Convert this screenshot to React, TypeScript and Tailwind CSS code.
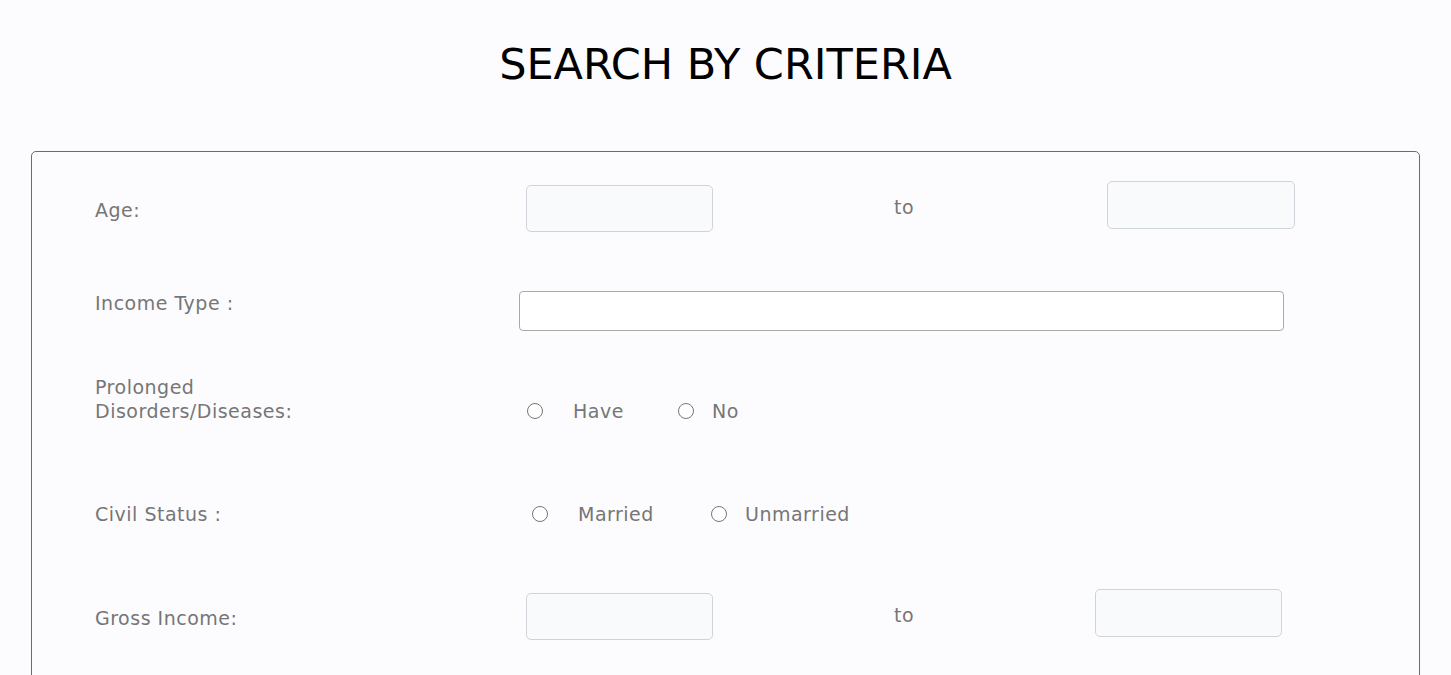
import React from "react";

const font = { fontFamily: '"DejaVu Sans", "Liberation Sans", sans-serif' };

const labelCls = "text-[19px] leading-6 tracking-[0.5px] text-[#767676]";

function Radio({ label, gap, width }: { label: string; gap: string; width?: string }) {
  return (
    <label className={`flex items-center ${width ?? ""}`}>
      <span className="block h-4 w-4 shrink-0 rounded-full border border-[#767676] bg-white" />
      <span className={`${gap} ${labelCls}`}>{label}</span>
    </label>
  );
}

export default function App() {
  return (
    <div className="min-h-screen bg-[#fcfcfe] pt-[42px]" style={font}>
      <h1 className="text-center text-[43px] leading-[44px] font-normal text-black">
        SEARCH BY CRITERIA
      </h1>

      <div className="mx-[31px] mt-[65px] h-[600px] rounded-[5px] border border-[#6b6b6b] pt-[29px] pl-[63px]">
        {/* Age */}
        <div className="flex items-start">
          <div className={`mt-[17px] w-[431px] ${labelCls}`}>Age:</div>
          <input className="mt-[4px] h-[47px] w-[187px] rounded-[5px] border border-[#d0d4da] bg-[#f9fafb] outline-none" />
          <div className={`mt-[14px] ml-[181px] w-[213px] ${labelCls}`}>to</div>
          <input className="h-[48px] w-[188px] rounded-[5px] border border-[#d0d4da] bg-[#f9fafb] outline-none" />
        </div>

        {/* Income type */}
        <div className="mt-[59px] flex items-start">
          <div className={`w-[424px] ${labelCls}`}>Income Type :</div>
          <input className="h-[40px] w-[765px] rounded-[4px] border border-[#a9a9a9] bg-white outline-none" />
        </div>

        {/* Prolonged disorders */}
        <div className="mt-[44px] flex items-start">
          <div className={`w-[432px] ${labelCls}`}>
            Prolonged
            <br />
            Disorders/Diseases:
          </div>
          <div className="mt-[24px] flex items-center">
            <Radio label="Have" gap="ml-[30px]" width="w-[151px]" />
            <Radio label="No" gap="ml-[18px]" />
          </div>
        </div>

        {/* Civil status */}
        <div className="mt-[79px] flex items-start">
          <div className={`w-[437px] ${labelCls}`}>Civil Status :</div>
          <div className="flex items-center">
            <Radio label="Married" gap="ml-[30px]" width="w-[179px]" />
            <Radio label="Unmarried" gap="ml-[18px]" />
          </div>
        </div>

        {/* Gross income */}
        <div className="mt-[63px] flex items-start">
          <div className={`mt-[17px] w-[431px] ${labelCls}`}>Gross Income:</div>
          <input className="mt-[4px] h-[47px] w-[187px] rounded-[5px] border border-[#d0d4da] bg-[#f9fafb] outline-none" />
          <div className={`mt-[14px] ml-[181px] w-[201px] ${labelCls}`}>to</div>
          <input className="h-[48px] w-[187px] rounded-[5px] border border-[#d0d4da] bg-[#f9fafb] outline-none" />
        </div>
      </div>
    </div>
  );
}
